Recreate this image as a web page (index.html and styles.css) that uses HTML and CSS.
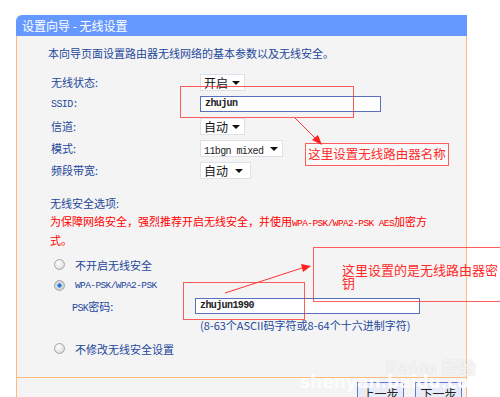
FILE: index.html
```html
<!DOCTYPE html>
<html lang="zh-CN">
<head>
    <meta charset="UTF-8">
    <title>设置向导 - 无线设置</title>
    <link rel="stylesheet" href="styles.css">
</head>
<body>
<div class="page">
    <div class="panel">
        <div class="panel-head">设置向导 - 无线设置</div>
        <div class="panel-body">
            <p class="intro">本向导页面设置路由器无线网络的基本参数以及无线安全。</p>

            <div class="form">
                <div class="row"><span class="label">无线状态:</span><span class="select w45">开启<i class="caret"></i></span></div>
                <div class="row"><span class="label mono-label">SSID:</span><span class="input ssid">zhujun</span></div>
                <div class="row"><span class="label">信道:</span><span class="select w45">自动<i class="caret"></i></span></div>
                <div class="row"><span class="label">模式:</span><span class="select w83"><span class="mono">11bgn mixed</span><i class="caret"></i></span></div>
                <div class="row"><span class="label">频段带宽:</span><span class="select w51">自动<i class="caret"></i></span></div>
            </div>

            <div class="section-title">无线安全选项:</div>
            <p class="warn">为保障网络安全，强烈推荐开启无线安全，并使用<span class="mono">WPA-PSK/WPA2-PSK AES</span>加密方<br>式。</p>

            <div class="radio-row first"><span class="radio"></span>不开启无线安全</div>
            <div class="radio-row"><span class="radio on"></span><span class="mono">WPA-PSK/WPA2-PSK</span></div>
            <div class="psk-row"><span class="psk-label"><span class="mono">PSK</span>密码:</span><span class="input psk">zhujun1990</span></div>
            <div class="hint">(8-63个ASCII码字符或8-64个十六进制字符)</div>
            <div class="radio-row last"><span class="radio"></span>不修改无线安全设置</div>
        </div>
        <div class="panel-foot">
            <button class="btn">上一步</button>
            <button class="btn">下一步</button>
        </div>
    </div>

    <!-- annotations drawn over the screenshot -->
    <div class="mark mark-ssid"></div>
    <div class="mark mark-psk"></div>
    <div class="note note-name">这里设置无线路由器名称</div>
    <div class="note note-key">这里设置的是无线路由器密<br>钥</div>
    <svg class="arrows" width="500" height="397" viewBox="0 0 500 397">
        <line x1="295" y1="118" x2="316" y2="139" stroke="#ff3030" stroke-width="1"/>
        <polygon points="322,145 312,140 318,135" fill="#ff2020"/>
        <line x1="225" y1="293" x2="302" y2="268" stroke="#ff3030" stroke-width="1"/>
        <polygon points="311,266 301,264 303,272" fill="#ff2020"/>
    </svg>

    <div class="watermark">
        <span class="wm-logo">Bai<b>du</b> 经验</span>
        <span class="wm-url">shenyan.baidu.com</span>
    </div>
</div>
</body>
</html>
```

FILE: styles.css
```css
body {
    margin: 0;
    background-color: #fff;
    font-family: "Noto Sans CJK SC", "DejaVu Sans", sans-serif;
    font-size: 11px;
    color: #24479b;
}
.page {
    position: relative;
    width: 500px;
    height: 397px;
    overflow: hidden;
}
.panel {
    width: 451px;
    margin: 15px 0 0 16px;
}
.panel-head {
    height: 21px;
    line-height: 21px;
    padding-left: 6px;
    background-color: #6699ff;
    color: #fff;
    font-size: 12px;
    border-top-left-radius: 6px;
}
.panel-body {
    background-color: #f4f4f4;
    border-left: 1px solid #ffbb77;
    border-right: 1px solid #ffbb77;
    border-bottom: 1px solid #ffbb77;
    padding: 9px 0 18px 31px;
}
.intro {
    margin: 0 0 10px 0;
    line-height: 16px;
}
.row {
    display: flex;
    align-items: center;
    height: 22px;
    padding-left: 3px;
}
.label {
    width: 149px;
}
.mono, .mono-label, .input {
    font-family: "Liberation Mono", monospace;
    font-size: 10px;
    letter-spacing: -0.6px;
    color: #222;
}
.mono-label {
    color: #24479b;
}
.select {
    position: relative;
    box-sizing: border-box;
    height: 17px;
    line-height: 15px;
    padding-left: 3px;
    background-color: #fff;
    border: 1px solid #dde0e6;
    color: #111;
    font-size: 12px;
}
.select .mono {
    font-size: 10px;
}
.w45 { width: 45px; }
.w51 { width: 51px; }
.w83 { width: 83px; }
.caret {
    position: absolute;
    right: 4px;
    top: 6px;
    border-left: 4px solid transparent;
    border-right: 4px solid transparent;
    border-top: 4px solid #111;
}
.w51 .caret {
    right: 7px;
}
.input {
    box-sizing: border-box;
    height: 16px;
    line-height: 14px;
    padding-left: 4px;
    background-color: #fff;
    border: 1px solid #5a6fc0;
    font-weight: bold;
}
.ssid { width: 181px; }
.section-title {
    margin-top: 14px;
    padding-left: 2px;
    line-height: 16px;
}
.warn {
    margin: 2px 0 0 2px;
    line-height: 17px;
    color: #ff0000;
    white-space: nowrap;
}
.warn .mono {
    color: #ff0000;
    font-size: 9.5px;
}
.radio-row {
    display: flex;
    align-items: center;
    height: 21px;
    padding-left: 6px;
}
.radio-row.first {
    margin-top: 5px;
}
.radio-row .mono {
    color: #24479b;
    font-size: 9.5px;
}
.radio-row.last {
    margin-top: 3px;
}
.radio {
    width: 11px;
    height: 11px;
    margin-right: 10px;
    border-radius: 50%;
    box-sizing: border-box;
    border: 1px solid #a8a8a8;
    background: radial-gradient(circle at 40% 35%, #ffffff 0%, #e4e4e4 60%, #c8c8c8 100%);
}
.radio.on {
    background: radial-gradient(circle, #1b64c8 0%, #3a8ae0 30%, #d6dde6 38%, #c8c8c8 100%);
}
.psk-row {
    display: flex;
    align-items: center;
    height: 19px;
    padding-left: 24px;
}
.psk-label {
    width: 123px;
}
.psk-label .mono {
    color: #24479b;
}
.psk {
    width: 225px;
}
.hint {
    height: 20px;
    line-height: 20px;
    padding-left: 152px;
}
.panel-foot {
    display: flex;
    justify-content: flex-end;
    gap: 11px;
    height: 30px;
    padding: 4px 4px 0 0;
    background-color: #f4f4f4;
    border-left: 1px solid #ffbb77;
    border-right: 1px solid #ffbb77;
}
.btn {
    width: 47px;
    height: 22px;
    padding: 0;
    background-color: #e8ecf8;
    border: 1px solid #6677cc;
    font-family: "Noto Sans CJK SC", sans-serif;
    font-size: 12px;
    color: #222;
}
.mark, .note {
    position: absolute;
    box-sizing: border-box;
    border: 1.5px solid rgba(255, 40, 40, 0.75);
}
.mark-ssid {
    left: 180px;
    top: 86px;
    width: 174px;
    height: 32px;
}
.mark-psk {
    left: 183px;
    top: 282px;
    width: 122px;
    height: 38px;
}
.note {
    color: #ff2a2a;
    font-size: 13px;
    white-space: nowrap;
}
.note-name {
    left: 305px;
    top: 143px;
    width: 144px;
    height: 23px;
    line-height: 20px;
    font-size: 12.5px;
    text-align: center;
    background-color: rgba(255, 255, 255, 0.5);
}
.note-key {
    left: 313px;
    top: 247px;
    width: 192px;
    height: 55px;
    padding: 15px 0 0 28px;
    line-height: 13px;
}
.arrows {
    position: absolute;
    left: 0;
    top: 0;
}
.watermark {
    position: absolute;
    left: 300px;
    top: 350px;
    width: 200px;
}
.wm-logo {
    position: absolute;
    left: 86px;
    top: 4px;
    font-family: "DejaVu Sans", sans-serif;
    font-size: 17px;
    font-weight: bold;
    color: rgba(255, 255, 255, 0.75);
    text-shadow: 0 0 1px rgba(180, 180, 180, 0.6);
}
.wm-logo b {
    font-size: 14px;
}
.wm-url {
    position: absolute;
    left: 0;
    top: 22px;
    font-family: "DejaVu Sans", sans-serif;
    font-size: 17px;
    font-weight: bold;
    color: rgba(255, 255, 255, 0.85);
}
```
